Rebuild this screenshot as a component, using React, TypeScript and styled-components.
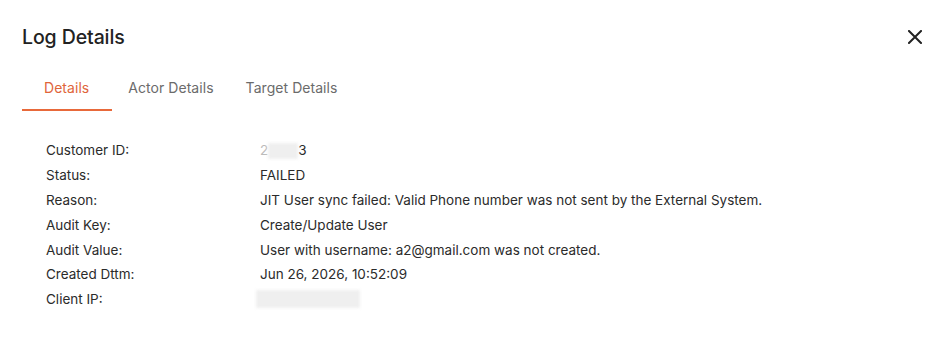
import React from "react";
import styled, { createGlobalStyle } from "styled-components";

const Global = createGlobalStyle`
  html, body { margin: 0; padding: 0; background: #fff; }
  body { font-family: Inter, "Noto Sans", sans-serif; }
`;

const Dialog = styled.div`
  width: 932px;
  height: 351px;
  box-sizing: border-box;
  background: #fff;
  padding: 24px 8px 0 22px;
  display: flex;
  flex-direction: column;
`;

const Header = styled.div`
  display: flex;
  align-items: center;
  justify-content: space-between;
  height: 26px;
`;

const Title = styled.h2`
  margin: 0;
  font-size: 19.5px;
  font-weight: 500;
  color: #222;
  letter-spacing: -0.1px;
`;

const CloseButton = styled.button`
  border: none;
  background: none;
  padding: 0;
  width: 18px;
  height: 18px;
  display: flex;
  align-items: center;
  justify-content: center;
  cursor: pointer;
`;

const Tabs = styled.div`
  display: flex;
  margin-top: 29px;
`;

const Tab = styled.div<{ $active?: boolean }>`
  font-size: 14px;
  letter-spacing: 0.05px;
  color: ${(p) => (p.$active ? "#e0653a" : "#6b6b6b")};
  padding: 0 ${(p) => (p.$active ? "23px 13px 22px" : "16px 13px")};
  border-bottom: 2px solid ${(p) => (p.$active ? "#e8693a" : "transparent")};
  line-height: 17px;
`;

const Rows = styled.div`
  display: flex;
  flex-direction: column;
  margin-top: 27px;
  padding-left: 24px;
`;

const Row = styled.div`
  display: grid;
  grid-template-columns: 214px 1fr;
  height: 24.8px;
  align-items: center;
  font-size: 13.5px;
  color: #2b2b2b;
`;

const Label = styled.span``;
const Value = styled.span``;

const Blur = styled.span<{ $w: number; $h: number; $shift?: number }>`
  display: inline-block;
  vertical-align: middle;
  width: ${(p) => p.$w}px;
  height: ${(p) => p.$h}px;
  margin-left: ${(p) => p.$shift ?? 0}px;
  background: #efefef;
  filter: blur(1.5px);
`;

const Faint = styled.span`
  color: #bbb;
`;

export default function App() {
  return (
    <>
      <Global />
      <Dialog>
        <Header>
          <Title>Log Details</Title>
          <CloseButton aria-label="close">
            <svg width="14" height="14" viewBox="0 0 14 14">
              <path d="M1 1L13 13M13 1L1 13" stroke="#222" strokeWidth="2" strokeLinecap="square" />
            </svg>
          </CloseButton>
        </Header>
        <Tabs>
          <Tab $active>Details</Tab>
          <Tab>Actor Details</Tab>
          <Tab>Target Details</Tab>
        </Tabs>
        <Rows>
          <Row><Label>Customer ID:</Label><Value><Faint>2</Faint><Blur $w={30} $h={16} />3</Value></Row>
          <Row><Label>Status:</Label><Value>FAILED</Value></Row>
          <Row><Label>Reason:</Label><Value>JIT User sync failed: Valid Phone number was not sent by the External System.</Value></Row>
          <Row><Label>Audit Key:</Label><Value>Create/Update User</Value></Row>
          <Row><Label>Audit Value:</Label><Value>User with username: a2@gmail.com was not created.</Value></Row>
          <Row><Label>Created Dttm:</Label><Value>Jun 26, 2026, 10:52:09</Value></Row>
          <Row><Label>Client IP:</Label><Value><Blur $w={104} $h={18} $shift={-4} /></Value></Row>
        </Rows>
      </Dialog>
    </>
  );
}
